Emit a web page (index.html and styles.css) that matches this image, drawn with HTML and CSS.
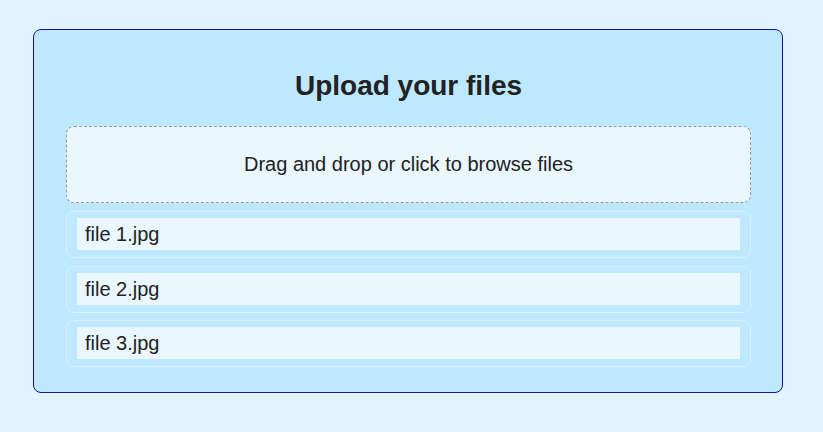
FILE: index.html
```html
<!DOCTYPE html>
<html>
<head>
<meta charset="utf-8">
<link rel="stylesheet" href="styles.css">
</head>
<body>
<div class="card">
  <h2 class="title">Upload your files</h2>
  <div class="dropzone">Drag and drop or click to browse files</div>
  <ul class="files">
    <li class="file"><span class="name">file 1.jpg</span></li>
    <li class="file"><span class="name">file 2.jpg</span></li>
    <li class="file"><span class="name">file 3.jpg</span></li>
  </ul>
</div>
</body>
</html>
```
FILE: styles.css
```css
html, body {
  margin: 0;
  padding: 0;
}
body {
  background: #e0f3fe;
  font-family: "Liberation Sans", Arial, sans-serif;
  color: #222;
  height: 432px;
  overflow: hidden;
}
.card {
  box-sizing: border-box;
  width: 750px;
  margin: 29px 0 0 33px;
  border: 1px solid #1a0f9a;
  border-radius: 8px;
  background: #bee8fe;
  padding: 0 31px 25px 32px;
}
.title {
  margin: 0;
  padding: 40px 0 24px;
  font-size: 28px;
  line-height: 32px;
  font-weight: bold;
  text-align: center;
  color: #222;
}
.dropzone {
  box-sizing: border-box;
  height: 77px;
  border: 1px dashed #999;
  border-radius: 8px;
  background: #eaf7ff;
  display: flex;
  align-items: center;
  justify-content: center;
  font-size: 20px;
  color: #222;
}
.files {
  list-style: none;
  margin: 8px 0 0;
  padding: 0;
  display: flex;
  flex-direction: column;
  gap: 7.5px;
}
.file {
  box-sizing: border-box;
  height: 47px;
  border: 1px solid #daf0fd;
  border-radius: 8px;
  padding: 6px 10px 7px 10px;
  display: flex;
}
.name {
  flex: 1;
  background: #eaf7ff;
  font-size: 20px;
  line-height: 33px;
  padding: 0 8px;
}
```
